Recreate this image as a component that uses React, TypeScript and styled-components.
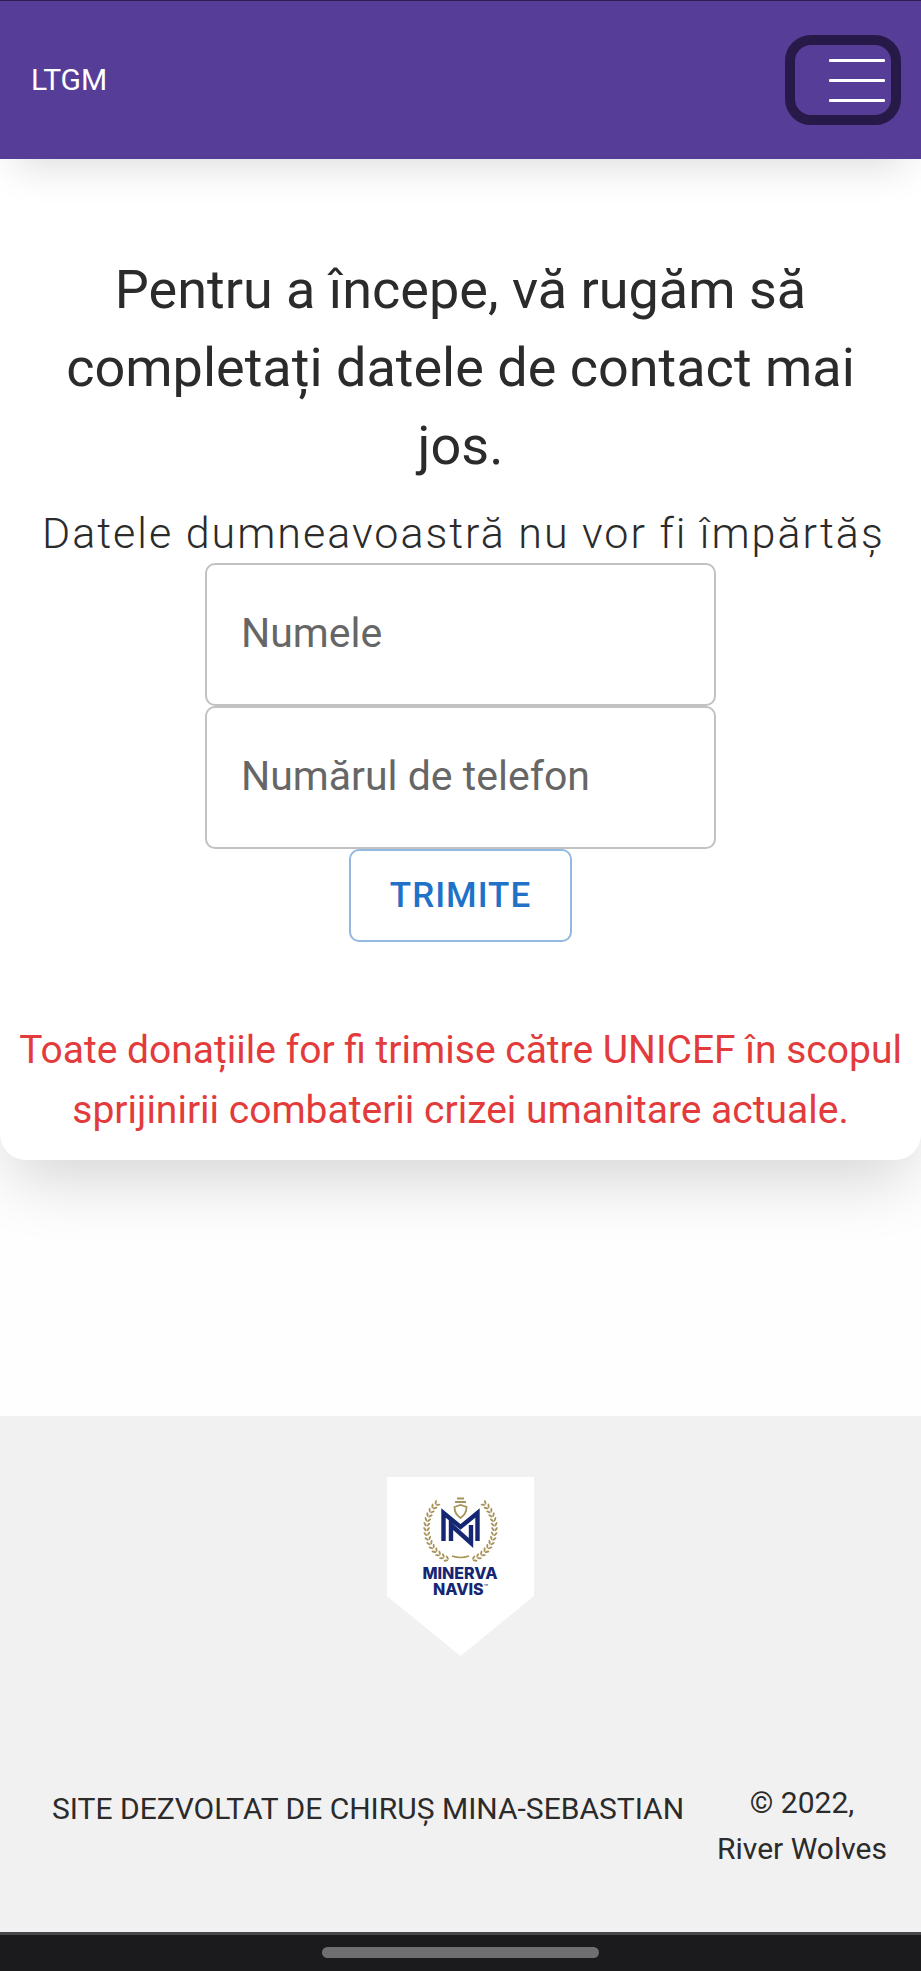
import React from 'react';
import styled, { createGlobalStyle } from 'styled-components';

const GlobalStyle = createGlobalStyle`
  *, *::before, *::after { box-sizing: border-box; }
  body { margin: 0; background: #fefefe; color: #2b2b2b; font-family: Roboto, sans-serif; }
  h1, p { margin: 0; font-weight: 400; }
`;

const Page = styled.div`
  display: flex;
  flex-direction: column;
  min-height: 100vh;
`;

const Header = styled.header`
  position: relative;
  z-index: 1;
  display: flex;
  align-items: center;
  justify-content: space-between;
  height: 159px;
  padding: 0 20px 0 31px;
  border-top: 1px solid #2c1e50;
  background: #563d98;
  box-shadow: 0 20px 40px -16px rgba(0, 0, 0, 0.16);
`;

const Brand = styled.a`
  color: #fff;
  font-size: 30px;
  line-height: 46px;
  text-decoration: none;
`;

const MenuButton = styled.button`
  display: flex;
  flex-direction: column;
  align-items: flex-end;
  justify-content: center;
  gap: 17px;
  width: 116px;
  height: 90px;
  padding: 0 6px;
  border: 10px solid #281a48;
  border-radius: 26px;
  background: transparent;
`;

const MenuLine = styled.span`
  width: 56px;
  height: 3px;
  border-radius: 1px;
  background: #fff;
`;

const Main = styled.main`
  flex: 1;
  padding-bottom: 80px;
`;

const Card = styled.section`
  padding: 92px 14px 20px;
  border-radius: 0 0 26px 26px;
  background: #fff;
  text-align: center;
  box-shadow: 0 30px 64px -10px rgba(0, 0, 0, 0.16);
`;

const Intro = styled.div`
  padding: 0 26px;
`;

const Title = styled.h1`
  font-size: 54px;
  line-height: 78px;
`;

const Subtitle = styled.p`
  overflow: hidden;
  padding: 18px 0 0 2px;
  font-size: 43px;
  font-weight: 300;
  line-height: 60px;
  letter-spacing: 2px;
  text-align: left;
  white-space: nowrap;
`;

const Form = styled.form`
  display: flex;
  flex-direction: column;
  align-items: center;
`;

const Field = styled.div`
  position: relative;
  width: 511px;
  max-width: 100%;
`;

const FieldInput = styled.input`
  display: block;
  width: 100%;
  height: 143px;
  padding: 0 34px;
  border: 2px solid #c2c2c2;
  border-radius: 10px;
  background: transparent;
  font: 400 41px Roboto, sans-serif;
`;

const FieldLabel = styled.label`
  position: absolute;
  inset: 0;
  display: flex;
  align-items: center;
  padding: 0 36px 4px;
  color: #666;
  font-size: 41px;
  pointer-events: none;
`;

const SubmitButton = styled.button`
  padding: 13px 39px;
  border: 2px solid #93b9e0;
  border-radius: 10px;
  background: transparent;
  color: #1f72c8;
  font: 500 35px/63px Roboto, sans-serif;
  letter-spacing: 1px;
  text-transform: uppercase;
`;

const Notice = styled.p`
  margin-top: 78px;
  color: #e33b3b;
  font-size: 39px;
  line-height: 60px;
`;

const Footer = styled.footer`
  display: flex;
  flex-direction: column;
  align-items: center;
  gap: 124px;
  padding: 61px 34px 60px;
  background: #f1f1f1;
`;

const FooterRow = styled.div`
  display: flex;
  justify-content: space-between;
  align-self: stretch;
  font-size: 30px;
  line-height: 46px;
`;

const Credit = styled.p`
  padding: 6px 0 0 18px;
`;

const Copyright = styled.p`
  text-align: center;
`;

const SystemBar = styled.div`
  display: flex;
  align-items: center;
  justify-content: center;
  height: 39px;
  padding-bottom: 2px;
  border-top: 3px solid #47484a;
  background: #1b1b1d;
`;

const HomeHandle = styled.span`
  width: 30%;
  height: 11px;
  border-radius: 6px;
  background: #6f6f71;
`;

const LEAF_ANGLES = Array.from({ length: 15 }, (_, i) => -42 - i * 8);

function Laurel() {
  return (
    <g fill="#a8935a">
      {LEAF_ANGLES.map((angle) => (
        <g key={angle} transform={`rotate(${angle}) translate(0 -34)`}>
          <ellipse cy="-2" rx="2.4" ry="1" transform="rotate(-35)" />
          <ellipse cy="2" rx="2.4" ry="1" transform="rotate(35)" />
        </g>
      ))}
    </g>
  );
}

function MinervaLogo() {
  return (
    <svg width="147" height="179" viewBox="0 0 147 179" role="img" aria-label="Minerva Navis">
      <path d="M0 0H147V119L73.500 179L0 119Z" fill="#fff" />
      <g transform="translate(73.5 51)"><Laurel /></g>
      <g transform="translate(73.5 51) scale(-1 1)"><Laurel /></g>
      <path d="M65 79Q73.500 82 82 79" fill="none" stroke="#a8935a" strokeWidth="1.500" />
      <path d="M70 21.500h7M68 25h11" fill="none" stroke="#a8935a" strokeWidth="2" />
      <path d="M67.500 30l6-2 6 2q0 7-6 11q-6-4-6-11z" fill="none" stroke="#a8935a" strokeWidth="1.800" />
      <path d="M56.500 64V36L73.500 50L90.500 36V64M64 64V48L84 66V48" fill="none" stroke="#152672" strokeWidth="4.400" />
      <text x="73" y="102" textAnchor="middle" fontFamily="Inter, sans-serif" fontWeight="800" fontSize="16" fill="#152672">MINERVA</text>
      <text x="46" y="118" fontFamily="Inter, sans-serif" fontWeight="800" fontSize="16" fill="#152672">
        NAVIS<tspan dy="-5" fontSize="7" fontWeight="400">™</tspan>
      </text>
    </svg>
  );
}

export default function App() {
  return (
    <>
      <GlobalStyle />
      <Page>
        <Header>
          <Brand href="#">LTGM</Brand>
          <MenuButton type="button" aria-label="Meniu">
            <MenuLine />
            <MenuLine />
            <MenuLine />
          </MenuButton>
        </Header>
        <Main>
          <Card>
            <Intro>
              <Title>Pentru a începe, vă rugăm să completați datele de contact mai jos.</Title>
              <Subtitle>Datele dumneavoastră nu vor fi împărtășite</Subtitle>
            </Intro>
            <Form onSubmit={(e) => e.preventDefault()}>
              <Field>
                <FieldInput id="name" type="text" />
                <FieldLabel htmlFor="name">Numele</FieldLabel>
              </Field>
              <Field>
                <FieldInput id="phone" type="tel" />
                <FieldLabel htmlFor="phone">Numărul de telefon</FieldLabel>
              </Field>
              <SubmitButton type="submit">Trimite</SubmitButton>
            </Form>
            <Notice>Toate donațiile for fi trimise către UNICEF în scopul sprijinirii combaterii crizei umanitare actuale.</Notice>
          </Card>
        </Main>
        <Footer>
          <MinervaLogo />
          <FooterRow>
            <Credit>SITE DEZVOLTAT DE CHIRUȘ MINA-SEBASTIAN</Credit>
            <Copyright>© 2022,<br />River Wolves</Copyright>
          </FooterRow>
        </Footer>
        <SystemBar><HomeHandle /></SystemBar>
      </Page>
    </>
  );
}
